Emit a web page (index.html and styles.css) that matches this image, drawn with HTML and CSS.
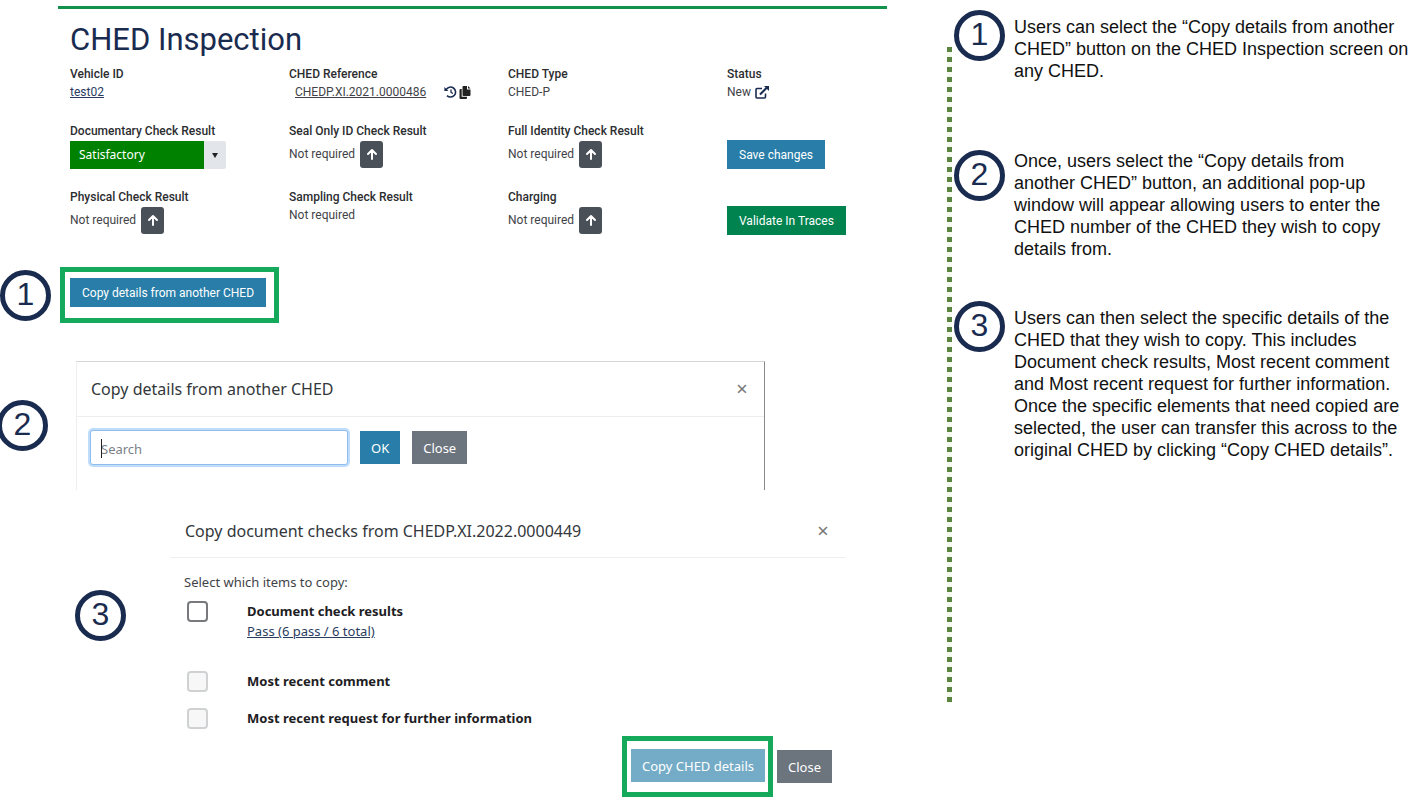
FILE: index.html
```html
<!DOCTYPE html>
<html lang="en">
<head>
    <meta charset="utf-8">
    <meta name="viewport" content="width=device-width, initial-scale=1">
    <title>CHED Inspection</title>
    <link rel="stylesheet" href="styles.css">
</head>
<body>
    <svg class="sprite" aria-hidden="true">
        <symbol id="arrow-up" viewBox="0 0 12 12">
            <path d="M6 11V2M2 6l4-4 4 4" fill="none" stroke="currentColor" stroke-width="2" stroke-linecap="round" stroke-linejoin="round"/>
        </symbol>
    </svg>

    <main class="screens">
        <section class="inspection">
            <h1>CHED Inspection</h1>
            <div class="fields">
                <div class="field">
                    <h2>Vehicle ID</h2>
                    <p><a class="link" href="#">test02</a></p>
                </div>
                <div class="field">
                    <h2>CHED Reference</h2>
                    <p class="reference">
                        <a class="reference-link" href="#">CHEDP.XI.2021.0000486</a>
                        <a class="icon-link" href="#" aria-label="History">
                            <svg width="13" height="12" viewBox="0 0 13 12" fill="none" stroke="currentColor">
                                <path d="M2.2 3.6A5 5 0 1 1 3 9.6" stroke-width="1.6"/>
                                <path d="M7 3.4V6.2l1.8 1.4" stroke-width="1.3"/>
                                <path d="M.4 1v4h4z" fill="currentColor" stroke="none"/>
                            </svg>
                        </a>
                        <a class="icon-link copy-icon" href="#" aria-label="Copy">
                            <svg width="12" height="13" viewBox="0 0 12 13" fill="currentColor">
                                <path d="M4.5 0H8v3.5h3.5V9a1 1 0 0 1-1 1h-6a1 1 0 0 1-1-1V1a1 1 0 0 1 1-1z"/>
                                <path d="M9 0l2.500 2.500H9z"/>
                                <path d="M1.500 3h1.200v7.800H8V12a1 1 0 0 1-1 1H1.500a1 1 0 0 1-1-1V4a1 1 0 0 1 1-1z"/>
                            </svg>
                        </a>
                    </p>
                </div>
                <div class="field">
                    <h2>CHED Type</h2>
                    <p>CHED-P</p>
                </div>
                <div class="field">
                    <h2>Status</h2>
                    <p class="status">New
                        <a class="icon-link" href="#" aria-label="Open in new window">
                            <svg width="14" height="13" viewBox="0 0 14 13" fill="none" stroke="currentColor">
                                <path d="M7 2.500H2a1 1 0 0 0-1 1V11a1 1 0 0 0 1 1h7.500a1 1 0 0 0 1-1V7.500" stroke-width="1.6"/>
                                <path d="M5 8.500L12 1.500" stroke-width="2"/>
                                <path d="M9 0h5v5z" fill="currentColor" stroke="none"/>
                            </svg>
                        </a>
                    </p>
                </div>

                <div class="field">
                    <h2><label for="documentary">Documentary Check Result</label></h2>
                    <div class="select">
                        <select id="documentary">
                            <option>Satisfactory</option>
                        </select>
                        <span class="select-arrow"></span>
                    </div>
                </div>
                <div class="field">
                    <h2>Seal Only ID Check Result</h2>
                    <p class="result">Not required <button class="up" aria-label="Escalate seal check"><svg width="12" height="12"><use href="#arrow-up"/></svg></button></p>
                </div>
                <div class="field">
                    <h2>Full Identity Check Result</h2>
                    <p class="result">Not required <button class="up" aria-label="Escalate identity check"><svg width="12" height="12"><use href="#arrow-up"/></svg></button></p>
                </div>
                <div class="field action">
                    <button class="btn">Save changes</button>
                </div>

                <div class="field">
                    <h2>Physical Check Result</h2>
                    <p class="result">Not required <button class="up" aria-label="Escalate physical check"><svg width="12" height="12"><use href="#arrow-up"/></svg></button></p>
                </div>
                <div class="field">
                    <h2>Sampling Check Result</h2>
                    <p>Not required</p>
                </div>
                <div class="field">
                    <h2>Charging</h2>
                    <p class="result">Not required <button class="up" aria-label="Change charging"><svg width="12" height="12"><use href="#arrow-up"/></svg></button></p>
                </div>
                <div class="field action">
                    <button class="btn btn-green">Validate In Traces</button>
                </div>
            </div>
        </section>

        <div class="copy-row">
            <span class="marker">1</span>
            <div class="highlight">
                <button class="btn">Copy details from another CHED</button>
            </div>
        </div>

        <div class="search-row">
            <span class="marker">2</span>
            <section class="dialog search-dialog">
                <header>
                    <h2>Copy details from another CHED</h2>
                    <button class="close" aria-label="Close">×</button>
                </header>
                <form class="search-form">
                    <div class="search-box">
                        <input type="text" placeholder="Search" aria-label="Search">
                        <span class="caret"></span>
                    </div>
                    <button type="button" class="btn btn-large">OK</button>
                    <button type="button" class="btn btn-large btn-grey">Close</button>
                </form>
            </section>
        </div>

        <div class="items-row">
            <span class="marker">3</span>
            <section class="dialog items-dialog">
                <header>
                    <h2>Copy document checks from CHEDP.XI.2022.0000449</h2>
                    <button class="close" aria-label="Close">×</button>
                </header>
                <p class="prompt">Select which items to copy:</p>
                <ul class="items">
                    <li>
                        <input type="checkbox" id="results">
                        <div>
                            <label for="results">Document check results</label>
                            <a class="link" href="#">Pass (6 pass / 6 total)</a>
                        </div>
                    </li>
                    <li>
                        <input type="checkbox" id="comment" disabled>
                        <label for="comment">Most recent comment</label>
                    </li>
                    <li>
                        <input type="checkbox" id="request" disabled>
                        <label for="request">Most recent request for further information</label>
                    </li>
                </ul>
                <footer>
                    <div class="highlight">
                        <button class="btn btn-large" disabled>Copy CHED details</button>
                    </div>
                    <button class="btn btn-large btn-grey">Close</button>
                </footer>
            </section>
        </div>
    </main>

    <aside class="guide">
        <div class="rail"></div>
        <ol class="steps">
            <li>
                <span class="marker">1</span>
                <p>Users can select the “Copy details from another CHED” button on the CHED Inspection screen on any CHED.</p>
            </li>
            <li class="tight">
                <span class="marker">2</span>
                <p>Once, users select the “Copy details from another CHED” button, an additional pop-up window will appear allowing users to enter the CHED number of the CHED they wish to copy details from.</p>
            </li>
            <li>
                <span class="marker">3</span>
                <p>Users can then select the specific details of the CHED that they wish to copy. This includes Document check results, Most recent comment and Most recent request for further information. Once the specific elements that need copied are selected, the user can transfer this across to the original CHED by clicking “Copy CHED details”.</p>
            </li>
        </ol>
    </aside>
</body>
</html>
```
FILE: styles.css
```css
* {
    box-sizing: border-box;
}
body {
    margin: 0;
    display: grid;
    grid-template-columns: 2fr 1fr;
    background: #fff;
    color: #3f4348;
    font-family: Roboto, sans-serif;
    font-size: 12px;
    line-height: 18px;
}
h1, h2, p, ul, ol {
    margin: 0;
    padding: 0;
    list-style: none;
}
button, input, select {
    font: inherit;
    margin: 0;
}
.sprite {
    position: absolute;
    width: 0;
    height: 0;
}

/* numbered circles */
.marker {
    flex: none;
    width: 51px;
    height: 51px;
    border: 5px solid #1a2b50;
    border-radius: 50%;
    color: #1a2b50;
    font-family: "Liberation Sans", Arial, sans-serif;
    font-size: 32px;
    line-height: 38px;
    text-align: center;
}
.highlight {
    border: 5px solid #14a95b;
}

/* buttons */
.btn {
    height: 29px;
    padding: 0 12px;
    border: 0;
    background: #287ea8;
    color: #fff;
    white-space: nowrap;
}
.btn-green {
    background: #00834f;
}
.btn-large {
    height: 33px;
    padding: 0 11px;
}
.btn-grey {
    background: #6c747d;
}
.btn:disabled {
    background: #74acc7;
}

/* inspection screen */
.inspection {
    margin: 6px 53px 0 58px;
    padding: 14px 0 0 12px;
    border-top: 3px solid #11914a;
}
.inspection h1 {
    height: 42px;
    color: #1a2b50;
    font-size: 31px;
    font-weight: 400;
    line-height: 34px;
}
.fields {
    display: grid;
    grid-template-columns: 219fr 219fr 219fr 160fr;
    grid-template-rows: 57px 66px auto;
}
.field h2 {
    color: #2b2d30;
    font-size: 12px;
    font-weight: 500;
    white-space: nowrap;
}
.link {
    color: #2a3d61;
}
.reference {
    display: flex;
    align-items: center;
    padding-left: 6px;
}
.reference-link {
    margin-right: 18px;
    color: #3f4348;
}
.icon-link {
    display: inline-flex;
    color: #1a2b50;
}
.copy-icon {
    margin-left: 2px;
    color: #222;
}
.status {
    display: flex;
    align-items: center;
    gap: 4px;
}
.result {
    display: flex;
    align-items: center;
    gap: 5px;
    height: 28px;
}
.up {
    display: flex;
    align-items: center;
    justify-content: center;
    width: 23px;
    height: 27px;
    padding: 0;
    border: 0;
    border-radius: 3px;
    background: #495057;
    color: #fff;
}
.action {
    padding-top: 18px;
}
.select {
    display: flex;
    width: 156px;
    height: 28px;
    margin-top: 1px;
}
.select select {
    flex: 1;
    appearance: none;
    padding: 0 9px;
    border: 0;
    border-radius: 0;
    background: #008200;
    color: #fff;
    font-family: "Noto Sans", sans-serif;
    font-size: 12px;
}
.select-arrow {
    display: flex;
    align-items: center;
    justify-content: center;
    width: 22px;
    border-radius: 0 2px 2px 0;
    background: #e2e5ea;
}
.select-arrow::before {
    content: "";
    border: 3px solid transparent;
    border-top: 5px solid #222;
    border-bottom: 0;
}

.copy-row {
    display: flex;
    align-items: center;
    gap: 9px;
    margin-top: 32px;
}
.copy-row .highlight {
    padding: 6px 8px 11px 5px;
}

/* dialogs */
.dialog {
    font-family: "Noto Sans", sans-serif;
    font-size: 13px;
}
.dialog header {
    display: flex;
    align-items: center;
    justify-content: space-between;
    padding: 0 14px;
    border-bottom: 1px solid #eceef0;
}
.dialog h2 {
    color: #33373b;
    font-size: 16px;
    font-weight: 400;
    line-height: 24px;
}
.close {
    width: 16px;
    padding: 0;
    border: 0;
    background: none;
    color: #777;
    font-size: 20px;
    text-align: center;
}
.search-row {
    display: flex;
    gap: 28px;
    margin: 38px 175px 0 -3px;
}
.search-row .marker {
    margin-top: 39px;
}
.search-dialog {
    flex: 1;
    height: 129px;
    border: solid #d4d4d4;
    border-width: 1px 1px 0;
    border-left-color: #eceef0;
    border-right-color: #8a8a8a;
}
.search-dialog header {
    height: 55px;
}
.search-form {
    display: flex;
    align-items: center;
    padding: 13px;
}
.search-form .btn {
    margin-left: 12px;
}
.search-box {
    position: relative;
}
.search-box input {
    display: block;
    width: 258px;
    height: 35px;
    padding: 2px 10px 0;
    border: 1px solid #8fbdee;
    border-radius: 3px;
    outline: 0;
    box-shadow: 0 0 0 2px #bfdcfb;
}
.search-box input::placeholder {
    color: #7b8187;
    opacity: 1;
}
.caret {
    position: absolute;
    top: 9px;
    left: 11px;
    width: 1px;
    height: 19px;
    background: #222;
}

.items-row {
    display: flex;
    gap: 45px;
    margin: 15px 95px 0 75px;
}
.items-row .marker {
    margin-top: 85px;
}
.items-dialog {
    flex: 1;
}
.items-dialog header {
    height: 53px;
}
.prompt {
    padding: 15px 13px 0;
}
.items {
    display: grid;
    grid-template-rows: 70px 37px 37px;
    padding: 10px 16px 0;
}
.items li {
    display: flex;
    align-items: flex-start;
    gap: 39px;
}
.items input {
    appearance: none;
    width: 21px;
    height: 21px;
    border: 2px solid #77797c;
    border-radius: 4px;
    background: #fff;
}
.items input:disabled {
    border-color: #d0d1d2;
    background: #f7f7f7;
}
.items label {
    display: block;
    color: #1d2023;
    font-weight: 700;
    line-height: 20px;
}
.items .link {
    line-height: 20px;
}
.items-dialog footer {
    display: flex;
    justify-content: flex-end;
    align-items: center;
    gap: 4px;
    padding-right: 13px;
    margin-top: -9px;
}
.items-dialog .highlight {
    padding: 8px 3px 10px 4px;
}

/* step by step guide */
.guide {
    display: flex;
    gap: 2px;
    padding-left: 7px;
}
.rail {
    flex: none;
    width: 5px;
    height: 656px;
    margin-top: 47px;
    background: repeating-linear-gradient(#5b8440 0 5px, #f4fbee 5px 10px);
}
.steps {
    display: grid;
    grid-template-rows: 140px 151px auto;
    margin-top: 10px;
    color: #111;
    font-family: "Liberation Sans", Arial, sans-serif;
    font-size: 18px;
    line-height: 22px;
}
.steps li {
    display: flex;
    align-items: flex-start;
    gap: 9px;
}
.steps p {
    padding-top: 6px;
}
.steps .tight p {
    padding: 0 20px 0 0;
}
```
